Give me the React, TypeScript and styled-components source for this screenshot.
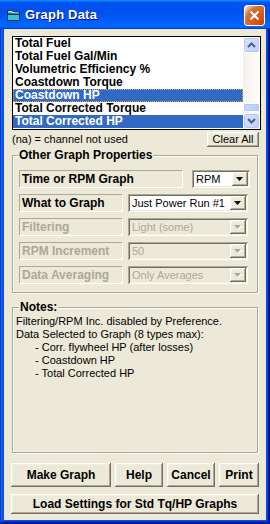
import React from 'react'
import styled, {createGlobalStyle} from 'styled-components'

const GlobalStyle = createGlobalStyle`
    html, body {
        margin: 0;
        padding: 0;
        background: #fff;
    }
    body {
        font-family: "Liberation Sans", Arial, sans-serif;
        font-size: 11px;
        color: #000;
    }
    * { box-sizing: border-box; }
`

const channels = [
    {label: 'Total Fuel'},
    {label: 'Total Fuel Gal/Min'},
    {label: 'Volumetric Efficiency %'},
    {label: 'Coastdown Torque'},
    {label: 'Coastdown HP', selected: true, focused: true},
    {label: 'Total Corrected Torque'},
    {label: 'Total Corrected HP', selected: true},
]

const properties = [
    {label: 'What to Graph', value: 'Just Power Run #1', disabled: false},
    {label: 'Filtering', value: 'Light (some)', disabled: true},
    {label: 'RPM Increment', value: '50', disabled: true},
    {label: 'Data Averaging', value: 'Only Averages', disabled: true},
]

const notes = [
    {text: 'Filtering/RPM Inc. disabled by Preference.'},
    {text: 'Data Selected to Graph (8 types max):'},
    {text: '- Corr. flywheel HP (after losses)', indent: true},
    {text: '- Coastdown HP', indent: true},
    {text: '- Total Corrected HP', indent: true},
]

function Chevron({down}: { down?: boolean }) {
    return (
        <svg width="9" height="6" viewBox="0 0 9 6">
            <polyline
                points={down ? '1,1 4.5,4.5 8,1' : '1,5 4.5,1.5 8,5'}
                fill="none"
                stroke="#4d6185"
                strokeWidth="2"
            />
        </svg>
    )
}

function DropArrow({disabled}: { disabled?: boolean }) {
    return (
        <svg width="8" height="5" viewBox="0 0 8 5">
            {disabled && <polygon points="1,1 8,1 4.5,5" fill="#fff"/>}
            <polygon points="0,0 7,0 3.5,4" fill={disabled ? '#aca899' : '#000'}/>
        </svg>
    )
}

function ComboBox({value, width, disabled}: { value: string; width: number; disabled?: boolean }) {
    return (
        <Combo $w={width} $disabled={disabled}>
            <ComboText $disabled={disabled}>{value}</ComboText>
            <ComboButton>
                <DropArrow disabled={disabled}/>
            </ComboButton>
        </Combo>
    )
}

export default function App() {
    return (
        <>
            <GlobalStyle/>
            <Window>
                <TitleBar>
                    <svg width="14" height="12" viewBox="0 0 14 12">
                        <path d="M0.5 1.5h5l1 1.5h6v8.5h-12z" fill="#3cc0d4" stroke="#16304e"/>
                        <path d="M1.5 2.5h3.5l1 1.5h5.5" fill="none" stroke="#e8fbff"/>
                        <rect x="1" y="4.5" width="11.5" height="1.5" fill="#16304e"/>
                    </svg>
                    <Title>Graph Data</Title>
                    <CloseButton>
                        <svg width="11" height="11" viewBox="0 0 11 11">
                            <path d="M1.5 1.5l8 8M9.5 1.5l-8 8" stroke="#fff" strokeWidth="2.2"/>
                        </svg>
                    </CloseButton>
                </TitleBar>
                <Body>
                    <ListBox>
                        <ListItems>
                            {channels.map((c) => (
                                <ListItem key={c.label} $selected={c.selected} $focused={c.focused}>
                                    {c.label}
                                </ListItem>
                            ))}
                        </ListItems>
                        <ScrollBar>
                            <ScrollButton><Chevron/></ScrollButton>
                            <ScrollTrack>
                                <ScrollThumb/>
                            </ScrollTrack>
                            <ScrollButton><Chevron down/></ScrollButton>
                        </ScrollBar>
                    </ListBox>

                    <NaRow>
                        <span>(na) = channel not used</span>
                        <SmallButton>Clear All</SmallButton>
                    </NaRow>

                    <Group>
                        <Legend>Other Graph Properties</Legend>
                        <PropRows>
                            <PropRow>
                                <PropLabel $wide>Time or RPM Graph</PropLabel>
                                <ComboBox value="RPM" width={58}/>
                            </PropRow>
                            {properties.map((p) => (
                                <PropRow key={p.label}>
                                    <PropLabel $disabled={p.disabled}>{p.label}</PropLabel>
                                    <ComboBox value={p.value} width={120} disabled={p.disabled}/>
                                </PropRow>
                            ))}
                        </PropRows>
                    </Group>

                    <NotesGroup>
                        <Legend>Notes:</Legend>
                        <NotesText>
                            {notes.map((n) => (
                                <NoteLine key={n.text} $indent={n.indent}>{n.text}</NoteLine>
                            ))}
                        </NotesText>
                    </NotesGroup>

                    <ButtonRow>
                        <Button $w={100}>Make Graph</Button>
                        <Button $w={48}>Help</Button>
                        <Button $w={48}>Cancel</Button>
                        <Button $w={40}>Print</Button>
                    </ButtonRow>
                    <WideButton>Load Settings for Std Tq/HP Graphs</WideButton>
                </Body>
            </Window>
        </>
    )
}

const Window = styled.div`
    width: 270px;
    height: 524px;
    display: flex;
    flex-direction: column;
    padding-bottom: 4px;
    background: #0855dd;
    box-shadow: inset -1px -1px #00138c, inset 1px 1px #0831d9, inset -2px -2px #001ea0,
    inset 2px 2px #166aee, inset -3px -3px #003bda, inset 3px 3px #0855dd;
`

const TitleBar = styled.div`
    height: 29px;
    flex: none;
    display: flex;
    align-items: center;
    padding: 0 5px 0 7px;
    gap: 4px;
    background: linear-gradient(180deg, #0997ff, #0053ee 8%, #0050ee 40%, #06f 88%, #06f 93%, #005bff 95%, #003dd7 96%, #003dd7);
`

const Title = styled.div`
    font-family: "Liberation Sans", Arial, sans-serif;
    font-weight: 700;
    font-size: 13px;
    color: #fff;
    text-shadow: 1px 1px #0f1089;
    letter-spacing: 0.2px;
`

const CloseButton = styled.div`
    margin-left: auto;
    margin-top: 2px;
    width: 21px;
    height: 21px;
    display: flex;
    align-items: center;
    justify-content: center;
    border: 1px solid #fff;
    border-radius: 3px;
    background: radial-gradient(circle at 90% 90%, #cc4600 0, #dc6527 55%, #cd7546 70%, #ffccb2 90%, #fff 100%);
`

const Body = styled.div`
    flex: 1;
    margin: 0 4px;
    padding: 7px 7px 6px;
    background: #ece9d8;
    display: flex;
    flex-direction: column;
`

const ListBox = styled.div`
    margin-left: 1px;
    width: 249px;
    height: 94px;
    flex: none;
    display: flex;
    background: #fff;
    border: 1px solid #000;
`

const ListItems = styled.div`
    flex: 1;
    min-width: 0;
    overflow: hidden;
`

const ListItem = styled.div<{ $selected?: boolean; $focused?: boolean }>`
    height: 13px;
    line-height: 13px;
    padding-left: 2px;
    font-weight: 700;
    font-size: 12px;
    white-space: nowrap;
    overflow: hidden;
    color: ${({$selected}) => ($selected ? '#fff' : '#000')};
    background: ${({$selected}) => ($selected ? '#316ac5' : 'transparent')};
    outline: ${({$focused}) => ($focused ? '1px dotted #e8a848' : 'none')};
    outline-offset: -1px;
`

const ScrollBar = styled.div`
    width: 17px;
    flex: none;
    display: flex;
    flex-direction: column;
    background: linear-gradient(90deg, #f3f1ec, #fefefb);
`

const ScrollButton = styled.div`
    height: 16px;
    flex: none;
    display: flex;
    align-items: center;
    justify-content: center;
    border: 1px solid #fff;
    border-radius: 3px;
    background: linear-gradient(135deg, #d9e4fe, #bccefa);
    box-shadow: inset 0 0 0 1px #b4c8f6;
`

const ScrollTrack = styled.div`
    flex: 1;
    display: flex;
    flex-direction: column;
    justify-content: flex-end;
    padding-bottom: 1px;
`

const ScrollThumb = styled.div`
    height: 9px;
    border: 1px solid #fff;
    border-radius: 2px;
    background: linear-gradient(90deg, #c9d8fc, #b9cbf6);
    box-shadow: inset 0 0 0 1px #b4c8f6;
`

const NaRow = styled.div`
    margin: 1px 0 0 1px;
    height: 16px;
    flex: none;
    display: flex;
    align-items: center;
    justify-content: space-between;
`

const raised = `
    background: #ece9d8;
    border: none;
    padding: 0;
    color: #000;
    font-family: "Liberation Sans", Arial, sans-serif;
    box-shadow: inset -1px -1px #716f64, inset 1px 1px #fff, inset -2px -2px #aca899, inset 2px 2px #f1efe2;
`

const SmallButton = styled.button`
    ${raised};
    width: 52px;
    height: 15px;
    font-size: 11px;
    line-height: 13px;
`

const Group = styled.fieldset`
    margin: 2px 0 0 1px;
    width: 246px;
    min-width: 0;
    flex: none;
    padding: 8px 7px 8px 6px;
    border: 1px solid #aca899;
    box-shadow: inset 1px 1px #fff, 1px 1px #fff;
`

const NotesGroup = styled(Group)`
    margin-top: 8px;
    padding: 1px 3px 0;

    & > legend {
        margin-left: 3px;
    }
`

const Legend = styled.legend`
    padding: 0 1px;
    margin-left: -1px;
    background: #ece9d8;
    font-weight: 700;
    font-size: 12px;
    line-height: 13px;
`

const PropRows = styled.div`
    display: flex;
    flex-direction: column;
    gap: 6px;
`

const PropRow = styled.div`
    height: 18px;
    display: flex;
    align-items: stretch;
    gap: 5px;
`

const PropLabel = styled.div<{ $wide?: boolean; $disabled?: boolean }>`
    ${({$wide}) => ($wide ? 'flex: 1; margin-right: 4px;' : 'width: 104px;')};
    display: flex;
    align-items: center;
    padding-left: 2px;
    font-weight: 700;
    font-size: 12px;
    white-space: nowrap;
    color: ${({$disabled}) => ($disabled ? '#aca899' : '#000')};
    border: 1px solid;
    border-color: #aca899 #fff #fff #aca899;
`

const Combo = styled.div<{ $w: number; $disabled?: boolean }>`
    width: ${({$w}) => $w}px;
    display: flex;
    padding: 2px;
    background: ${({$disabled}) => ($disabled ? '#ece9d8' : '#fff')};
    box-shadow: inset 1px 1px #aca899, inset -1px -1px #fff, inset 2px 2px #716f64, inset -2px -2px #f1efe2;
`

const ComboText = styled.div<{ $disabled?: boolean }>`
    flex: 1;
    min-width: 0;
    padding-left: 2px;
    display: flex;
    align-items: center;
    white-space: nowrap;
    overflow: hidden;
    font-size: 11px;
    color: ${({$disabled}) => ($disabled ? '#aca899' : '#000')};
`

const ComboButton = styled.div`
    ${raised};
    width: 16px;
    flex: none;
    display: flex;
    align-items: center;
    justify-content: center;
`

const NotesText = styled.div`
    height: 137px;
`

const NoteLine = styled.div<{ $indent?: boolean }>`
    line-height: 13px;
    font-size: 11px;
    white-space: nowrap;
    padding-left: ${({$indent}) => ($indent ? '19px' : '0')};
`

const ButtonRow = styled.div`
    margin-top: 10px;
    display: flex;
    gap: 4px;
    flex: none;
`

const Button = styled.button<{ $w: number }>`
    ${raised};
    width: ${({$w}) => $w}px;
    height: 24px;
    font-weight: 700;
    font-size: 12px;
`

const WideButton = styled.button`
    ${raised};
    margin-top: 7px;
    width: 248px;
    height: 20px;
    flex: none;
    font-weight: 700;
    font-size: 12px;
`
